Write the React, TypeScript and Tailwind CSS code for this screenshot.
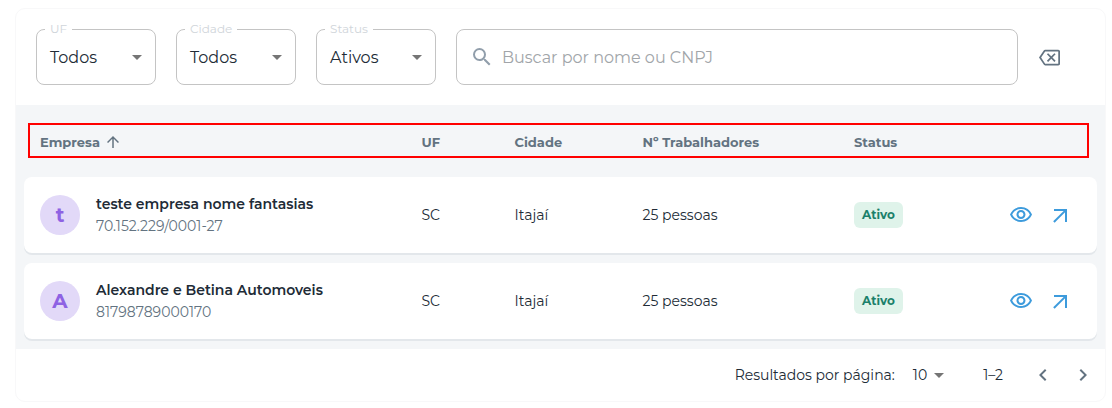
import {
  MdArrowDropDown,
  MdArrowUpward,
  MdKeyboardArrowLeft,
  MdKeyboardArrowRight,
  MdOutlineBackspace,
  MdOutlineVisibility,
  MdSearch,
} from "react-icons/md";

type Company = { initial: string; name: string; document: string };

const companies: Company[] = [
  { initial: "t", name: "teste empresa nome fantasias", document: "70.152.229/0001-27" },
  { initial: "A", name: "Alexandre e Betina Automoveis", document: "81798789000170" },
];

function OpenArrow() {
  return (
    <svg viewBox="0 0 20 20" className="size-5" fill="none" stroke="currentColor" strokeWidth="2">
      <path d="M4 5H16V17" />
      <path d="M15.6 5.4L3.9 17" />
    </svg>
  );
}

function FilterSelect({ label, value }: { label: string; value: string }) {
  return (
    <div className="relative flex h-14 w-[120px] items-center justify-between rounded-lg border border-[#c4c4c4] pl-[13px] pr-[6px]">
      <span className="absolute -top-2 left-2 bg-white px-[5px] text-xs leading-[14px] text-[#d0d5da]">
        {label}
      </span>
      <span className="pt-0.5 text-base text-[#212b36]">{value}</span>
      <MdArrowDropDown className="size-6 text-[#757575]" />
    </div>
  );
}

function CompanyRow({ company }: { company: Company }) {
  return (
    <div className="grid h-[76px] grid-cols-[381.5px_93px_128px_211.5px_155px_1fr] items-center rounded-lg bg-white pl-4 text-sm text-[#212b36] shadow-[0_2px_0_#e3e7eb]">
      <div className="flex items-center gap-4">
        <div className="flex size-10 items-center justify-center rounded-full bg-[#e2d9f8] text-xl font-bold text-[#8e62e3]">
          {company.initial}
        </div>
        <div className="leading-[22px]">
          <div className="font-semibold">{company.name}</div>
          <div className="text-[#637381]">{company.document}</div>
        </div>
      </div>
      <div>SC</div>
      <div>Itajaí</div>
      <div>25 pessoas</div>
      <div>
        <span className="inline-flex h-[26px] w-[49px] items-center justify-center rounded-md bg-[#dff3ea] text-xs font-bold text-[#1b806a]">
          Ativo
        </span>
      </div>
      <div className="flex items-center gap-[17px] text-[#3d9bdc]">
        <MdOutlineVisibility className="size-6" />
        <OpenArrow />
      </div>
    </div>
  );
}

export default function App() {
  return (
    <div className="h-[408px] bg-white pl-[15px] pt-2 font-['Montserrat','Inter',sans-serif]">
      <div className="h-[394px] w-[1091px] overflow-hidden rounded-[10px] border border-[#f8f8f9] bg-white">
        <div className="flex h-24 items-center gap-5 pl-5">
          <FilterSelect label="UF" value="Todos" />
          <FilterSelect label="Cidade" value="Todos" />
          <FilterSelect label="Status" value="Ativos" />
          <div className="flex h-14 w-[562px] items-center gap-2 rounded-lg border border-[#c4c4c4] pl-[13px]">
            <MdSearch className="size-6 text-[#919eab]" />
            <span className="pt-0.5 text-base text-[#a1a5a9]">Buscar por nome ou CNPJ</span>
          </div>
          <MdOutlineBackspace className="ml-px size-[21px] text-[#637381]" />
        </div>

        <div className="h-[244px] bg-[#f4f6f8] px-2 pt-[18px]">
          <div className="ml-1 grid h-[35px] w-[1061px] grid-cols-[381.5px_93px_128px_211.5px_1fr] items-center border-2 border-[#ff0000] pl-[10px] pt-[5px] text-[13px] font-bold text-[#637381]">
            <div className="flex items-center gap-1">
              Empresa
              <MdArrowUpward className="-mt-0.5 size-[18px]" />
            </div>
            <div>UF</div>
            <div>Cidade</div>
            <div>Nº Trabalhadores</div>
            <div>Status</div>
          </div>
          <div className="mt-[19px] flex flex-col gap-[10px]">
            {companies.map((company) => (
              <CompanyRow key={company.document} company={company} />
            ))}
          </div>
        </div>

        <div className="flex h-[52px] items-center justify-end pr-[10px] text-sm text-[#212b36]">
          <span>Resultados por página:</span>
          <span className="ml-[18px]">10</span>
          <MdArrowDropDown className="size-6 text-[#757575]" />
          <span className="ml-8">1–2</span>
          <MdKeyboardArrowLeft className="ml-7 size-6 text-[#637381]" />
          <MdKeyboardArrowRight className="ml-4 size-6 text-[#637381]" />
        </div>
      </div>
    </div>
  );
}
